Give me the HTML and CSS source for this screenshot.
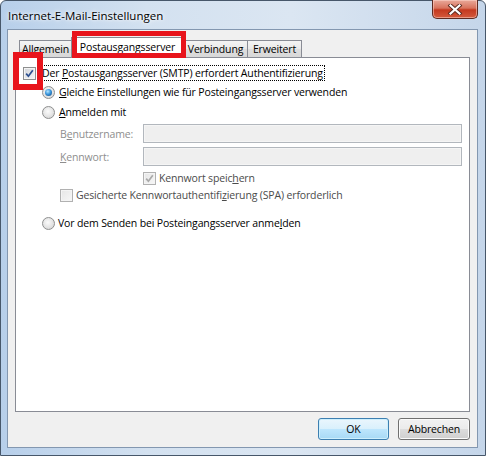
FILE: index.html
```html
<!DOCTYPE html>
<html>
	<head>
		<meta charset="utf-8">
		<title>Internet-E-Mail-Einstellungen</title>
		<link rel="stylesheet" href="styles.css">
	</head>
	<body>
		<div class="window">
			<div class="titlebar">
				<span class="title">Internet-E-Mail-Einstellungen</span>
				<div class="close">
					<svg width="16" height="11" viewBox="0 0 16 11">
						<path d="M3.5 1.5 L12.5 9.5 M12.5 1.5 L3.5 9.5" stroke="#5a2a20" stroke-width="4" stroke-linecap="square"/>
						<path d="M3.5 1.5 L12.5 9.5 M12.5 1.5 L3.5 9.5" stroke="#fff" stroke-width="2.2" stroke-linecap="square"/>
					</svg>
				</div>
			</div>
			<div class="client">
				<div class="tabs">
					<div class="tab t1">Allgemein</div>
					<div class="tab active">Postausgangsserver</div>
					<div class="tab t3">Verbindung</div>
					<div class="tab t4">Erweitert</div>
				</div>
				<div class="panel">
					<div class="row r1">
						<span class="cb checked">
							<svg width="11" height="11" viewBox="0 0 11 11"><path d="M2.2 5.6 L4.4 8.2 L8.8 2.2" fill="none" stroke="#2c4f8f" stroke-width="1.7"/></svg>
						</span>
						<span class="focus">Der <u>P</u>ostausgangsserver (SMTP) erfordert Authentifizierung</span>
					</div>
					<div class="row r2">
						<span class="rb on"></span>
						<span class="txt"><u>G</u>leiche Einstellungen wie für Posteingangsserver verwenden</span>
					</div>
					<div class="row r3">
						<span class="rb"></span>
						<span class="txt"><u>A</u>nmelden mit</span>
					</div>
					<div class="field f1">
						<span class="lbl">B<u>e</u>nutzername:</span>
						<span class="input"></span>
					</div>
					<div class="field f2">
						<span class="lbl"><u>K</u>ennwort:</span>
						<span class="input"></span>
					</div>
					<div class="row r4">
						<span class="cb checked dis">
							<svg width="11" height="11" viewBox="0 0 11 11"><path d="M2.2 5.6 L4.4 8.2 L8.8 2.2" fill="none" stroke="#a9a9a9" stroke-width="1.7"/></svg>
						</span>
						<span class="txt grey">Kennwort speic<u>h</u>ern</span>
					</div>
					<div class="row r5">
						<span class="cb dis"></span>
						<span class="txt grey">Gesicherte Kennwortauthentifi<u>z</u>ierung (SPA) erforderlich</span>
					</div>
					<div class="row r6">
						<span class="rb"></span>
						<span class="txt">Vor dem Senden bei Posteingangsserver anme<u>l</u>den</span>
					</div>
				</div>
				<div class="buttons">
					<div class="btn ok">OK</div>
					<div class="btn">Abbrechen</div>
				</div>
			</div>
			<div class="mark mark-tab"></div>
			<div class="mark mark-cb"></div>
		</div>
	</body>
</html>
```
FILE: styles.css
```css
*{margin: 0;padding: 0;box-sizing: border-box;}
body{
	width: 486px;
	height: 456px;
	overflow: hidden;
	font-family: "Open Sans", "Liberation Sans", sans-serif;
	font-size: 10.5px;
	letter-spacing: -0.15px;
	color: #000;
}
u{text-decoration: underline;text-underline-offset: 1px;}
.window{
	position: relative;
	width: 486px;
	height: 456px;
	display: flex;
	flex-direction: column;
	padding: 0 7px 7px 6px;
	border: 1px solid #47576a;
	border-radius: 6px 6px 0 0;
	background: linear-gradient(90deg, #b7cfea 0%, #d3e1f0 30%, #dbe6f2 60%, #c5d6ea 100%);
}
.titlebar{
	height: 28px;
	display: flex;
	align-items: flex-start;
}
.title{
	padding: 7px 0 0 1px;
	font-size: 11.5px;
	letter-spacing: 0;
	text-shadow: 0 0 6px #fff, 0 0 3px #fff;
}
.close{
	margin: -1px 0 0 auto;
	width: 46px;
	height: 19px;
	border: 1px solid #5e2b22;
	border-top: none;
	border-radius: 0 0 5px 5px;
	background: linear-gradient(#e9a99a 0%, #d8735d 45%, #c4391f 55%, #d45a3d 100%);
	box-shadow: inset 0 0 0 1px rgba(255,220,210,0.5);
	display: flex;
	align-items: center;
	justify-content: center;
}
.client{
	flex: 1;
	display: flex;
	flex-direction: column;
	background: #f0f0f0;
	border: 1px solid #8397b0;
	padding: 7px 7px 0 7px;
}
.tabs{
	height: 20px;
	display: flex;
	align-items: flex-end;
	padding-left: 4px;
}
.tab{
	height: 17px;
	line-height: 16px;
	text-align: center;
	border: 1px solid #898c95;
	border-bottom: none;
	background: linear-gradient(#f4f4f4, #e9e9e9 50%, #dedede 50%, #d8d8d8);
	white-space: nowrap;
}
.t1{width: 52px;border-right: none;}
.t3{width: 64px;border-left: none;}
.t4{width: 54px;border-left: none;}
.tab.active{
	width: 113px;
	height: 21px;
	line-height: 19px;
	margin-bottom: -1px;
	background: #fff;
	position: relative;
	z-index: 1;
}
.panel{
	height: 355px;
	background: #fff;
	border: 1px solid #898c95;
	padding-top: 7px;
}
.row{
	height: 16px;
	display: flex;
	align-items: center;
	line-height: 16px;
	white-space: nowrap;
}
.r1{padding-left: 7px;}
.r2{margin-top: 3px;padding-left: 26px;}
.r3{margin-top: 4px;padding-left: 26px;}
.r4{margin-top: 4px;padding-left: 127px;}
.r5{margin-top: 1px;padding-left: 44px;}
.r6{margin-top: 12px;padding-left: 26px;}
.focus{
	margin-left: 5px;
	padding: 0 1px;
	line-height: 14px;
	outline: 1px dotted #000;
}
.txt{margin-left: 4px;}
.r4 .txt{margin-left: 3px;}
.r5 .txt{margin-left: 3px;}
.r6 .txt{margin-left: 3px;}
.grey{color: #4b4b4b;}
.field{
	display: grid;
	grid-template-columns: 83px 1fr;
	align-items: center;
	padding: 0 7px 0 44px;
	height: 19px;
}
.f1{margin-top: 4px;}
.f2{margin-top: 4px;}
.lbl{color: #8e8e8e;}
.input{
	height: 19px;
	border: 1px solid #b2b7bd;
	background: #efefef;
	box-shadow: inset 0 0 0 1px #f5f5f5;
}
.cb{
	width: 13px;
	height: 13px;
	flex: none;
	border: 1px solid #8e8f8f;
	background: linear-gradient(135deg, #d0d3d8, #f7f7f7);
	box-shadow: inset 0 0 0 1px #f4f4f4;
	display: flex;
	align-items: center;
	justify-content: center;
}
.cb.dis{
	border-color: #b1b1b1;
	background: linear-gradient(135deg, #e6e6e6, #f7f7f7);
}
.rb{
	width: 13px;
	height: 13px;
	flex: none;
	border-radius: 50%;
	border: 1px solid #8e8f8f;
	background: radial-gradient(circle at 45% 40%, #fbfbfb 0, #e6e6e6 50%, #cfcfcf 100%);
	display: flex;
	align-items: center;
	justify-content: center;
}
.rb.on::after{
	content: "";
	width: 7px;
	height: 7px;
	border-radius: 50%;
	background: radial-gradient(circle at 40% 35%, #b6e6ff 0, #3a97dd 45%, #0e3f78 100%);
}
.buttons{
	display: flex;
	justify-content: flex-end;
	gap: 9px;
	margin-top: 6px;
}
.btn{
	width: 72px;
	height: 22px;
	line-height: 20px;
	text-align: center;
	border: 1px solid #707070;
	border-radius: 3px;
	background: linear-gradient(#f2f2f2 0, #ebebeb 50%, #dddddd 50%, #cfcfcf 100%);
	box-shadow: inset 0 0 0 1px #fbfbfb;
}
.btn.ok{
	width: 71px;
	border-color: #3c7fb1;
	background: linear-gradient(#eaf6fd 0, #d9f0fc 50%, #bee6fd 50%, #a7d9f5 100%);
	box-shadow: inset 0 0 0 1px #cdeffd;
}
.mark{
	position: absolute;
	border: 5px solid #e8141c;
	z-index: 5;
}
.mark-tab{
	left: 71px;
	top: 30px;
	width: 114px;
	height: 27px;
}
.mark-cb{
	left: 12px;
	top: 51px;
	width: 30px;
	height: 38px;
	border-width: 6px;
}
```
